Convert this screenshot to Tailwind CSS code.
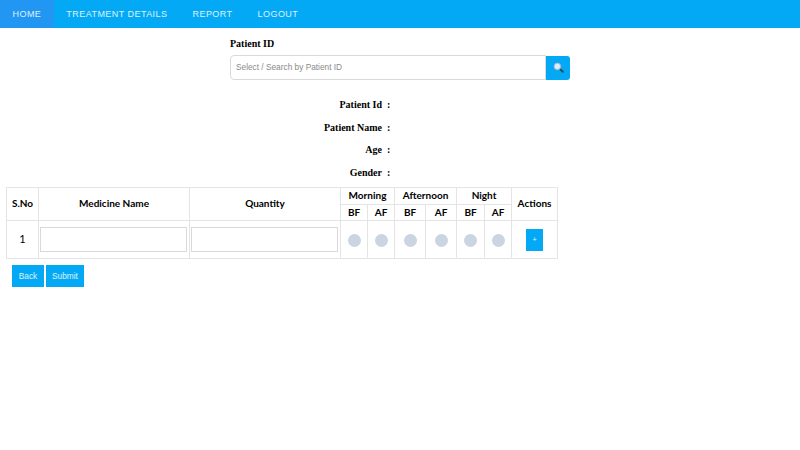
<!DOCTYPE html>
<html lang="en">
<head>
    <meta charset="UTF-8">
    <title>Home</title>
    <script src="https://cdn.jsdelivr.net/npm/@tailwindcss/browser@4"></script>
</head>
<body class="bg-white font-['Liberation_Sans',sans-serif]">
    <nav class="flex h-[28px] bg-[#03a9f4] text-[9px] tracking-[0.45px] text-white/85">
        <a class="flex items-center px-[12.5px] pt-[1px] bg-[#2196f3]">HOME</a>
        <a class="flex items-center px-[12.5px] pt-[1px]">TREATMENT DETAILS</a>
        <a class="flex items-center px-[12.5px] pt-[1px]">REPORT</a>
        <a class="flex items-center px-[12.5px] pt-[1px]">LOGOUT</a>
    </nav>

    <div class="w-[340px] mx-auto pt-[9px]">
        <label class="block h-[17.5px] font-['Liberation_Serif',serif] font-bold text-[10px] leading-[14px] text-black">Patient ID</label>
        <div class="flex items-end h-[25px]">
            <input type="text" placeholder="Select / Search by Patient ID" class="flex-1 min-w-0 h-[25px] px-[5px] bg-white border border-[#d9d9d9] rounded-l-[4px] text-[8.3px] placeholder:text-[#8a8a8a] outline-none">
            <button class="flex items-center justify-center w-[24px] h-[23.5px] bg-[#03a9f4] rounded-r-[3px]">
                <svg width="11" height="11" viewBox="0 0 11 11">
                    <path d="M6.6 6.6 L9.8 9.8" stroke="#33475b" stroke-width="2" stroke-linecap="round"/>
                    <circle cx="4.4" cy="4.4" r="3.3" fill="#d8eefb" stroke="#9fb6c6" stroke-width="1"/>
                </svg>
            </button>
        </div>

        <div class="pt-[14.5px] font-['Liberation_Serif',serif] font-bold text-[10px] leading-[14px] text-black">
            <div class="flex h-[22.6px] items-center"><span class="w-[152px] text-right">Patient Id</span><span class="ml-[5px]">:</span></div>
            <div class="flex h-[22.6px] items-center"><span class="w-[152px] text-right">Patient Name</span><span class="ml-[5px]">:</span></div>
            <div class="flex h-[22.6px] items-center"><span class="w-[152px] text-right">Age</span><span class="ml-[5px]">:</span></div>
            <div class="flex h-[22.6px] items-center"><span class="w-[152px] text-right">Gender</span><span class="ml-[5px]">:</span></div>
        </div>
    </div>

    <table class="ml-[6px] mt-[3px] w-[551px] table-fixed border-collapse font-['Lato',sans-serif] text-[10px] leading-[12px] text-black text-center [&_td]:border [&_td]:border-[#e4e4e4] [&_th]:border [&_th]:border-[#e4e4e4]">
        <colgroup>
            <col class="w-[32px]"><col class="w-[151px]"><col class="w-[151px]">
            <col class="w-[27px]"><col class="w-[27px]"><col class="w-[31px]"><col class="w-[31px]"><col class="w-[28px]"><col class="w-[27px]"><col class="w-[46px]">
        </colgroup>
        <thead>
            <tr class="h-[17px]">
                <th rowspan="2" class="pb-[2px]">S.No</th>
                <th rowspan="2" class="pb-[2px]">Medicine Name</th>
                <th rowspan="2" class="pb-[2px]">Quantity</th>
                <th colspan="2" class="pb-[2px]">Morning</th>
                <th colspan="2" class="pb-[2px]">Afternoon</th>
                <th colspan="2" class="pb-[2px]">Night</th>
                <th rowspan="2" class="pb-[2px]">Actions</th>
            </tr>
            <tr class="h-[16px]">
                <th class="pb-[2px]">BF</th><th class="pb-[2px]">AF</th><th class="pb-[2px]">BF</th><th class="pb-[2px]">AF</th><th class="pb-[2px]">BF</th><th class="pb-[2px]">AF</th>
            </tr>
        </thead>
        <tbody>
            <tr class="h-[38px]">
                <td class="text-[11px] pb-[1px]">1</td>
                <td class="pl-[1px] pr-[2px]"><input type="text" class="block w-full h-[25px] border border-[#d9d9d9] bg-white"></td>
                <td class="pl-[1px] pr-[2px]"><input type="text" class="block w-full h-[25px] border border-[#d9d9d9] bg-white"></td>
                <td><span class="block mx-auto mt-[2px] size-[13px] rounded-full bg-[#cbd5e1]"></span></td>
                <td><span class="block mx-auto mt-[2px] size-[13px] rounded-full bg-[#cbd5e1]"></span></td>
                <td><span class="block mx-auto mt-[2px] size-[13px] rounded-full bg-[#cbd5e1]"></span></td>
                <td><span class="block mx-auto mt-[2px] size-[13px] rounded-full bg-[#cbd5e1]"></span></td>
                <td><span class="block mx-auto mt-[2px] size-[13px] rounded-full bg-[#cbd5e1]"></span></td>
                <td><span class="block mx-auto mt-[2px] size-[13px] rounded-full bg-[#cbd5e1]"></span></td>
                <td><button class="block mx-auto mt-[1px] w-[17px] h-[22px] bg-[#03a9f4] text-white/90 text-[7px] font-['Liberation_Sans',sans-serif]">+</button></td>
            </tr>
        </tbody>
    </table>

    <div class="flex gap-[2px] ml-[12px] mt-[6px]">
        <button class="w-[32px] h-[22px] bg-[#03a9f4] text-white/85 text-[8.3px]">Back</button>
        <button class="w-[38px] h-[22px] bg-[#03a9f4] text-white/85 text-[8.3px]">Submit</button>
    </div>
</body>
</html>
